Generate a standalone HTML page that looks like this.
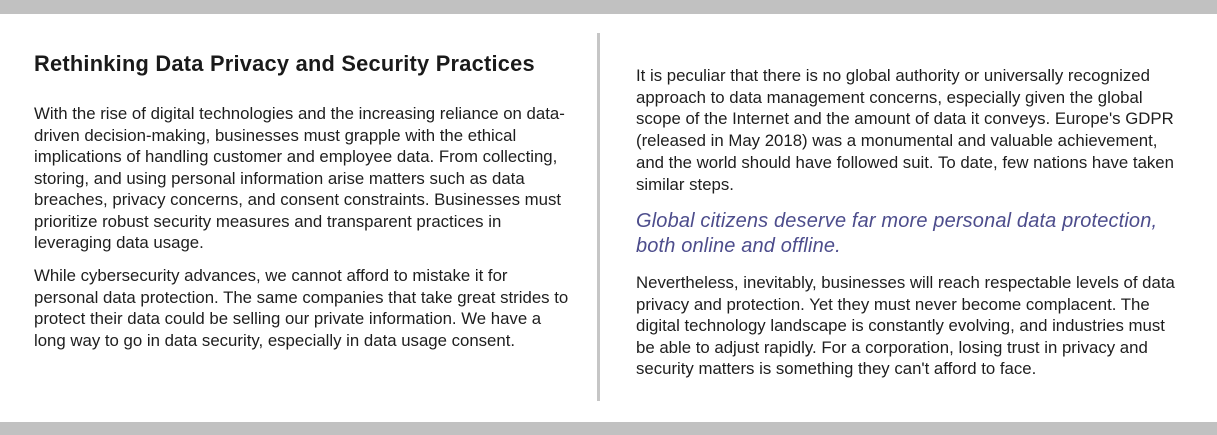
<!DOCTYPE html>
<html><head><style>
html,body{margin:0;padding:0;width:1217px;height:435px;background:#fff;overflow:hidden;position:relative;font-family:"Liberation Sans",sans-serif;}
.bar{position:absolute;left:0;width:1217px;background:#c1c1c1;}
.l{position:absolute;white-space:nowrap;font-size:16.8px;color:#1e1e1e;line-height:20px;letter-spacing:0px;}
.q{position:absolute;white-space:nowrap;font-size:20px;color:#4d4d8c;font-style:italic;line-height:24px;letter-spacing:0.15px;}
h1{position:absolute;left:34px;top:51px;margin:0;font-size:21.8px;font-weight:bold;color:#1a1a1a;line-height:26px;letter-spacing:0.25px;white-space:nowrap;}
</style></head><body>
<div class="bar" style="top:0;height:14px"></div>
<div class="bar" style="top:422px;height:13px"></div>
<div style="position:absolute;left:597px;top:33px;width:3px;height:368px;background:#c6c6c6"></div>
<h1>Rethinking Data Privacy and Security Practices</h1>
<div class="l" style="left:34px;top:104px">With the rise of digital technologies and the increasing reliance on data-</div>
<div class="l" style="left:34px;top:126px">driven decision-making, businesses must grapple with the ethical</div>
<div class="l" style="left:34px;top:147px">implications of handling customer and employee data. From collecting,</div>
<div class="l" style="left:34px;top:169px">storing, and using personal information arise matters such as data</div>
<div class="l" style="left:34px;top:190px">breaches, privacy concerns, and consent constraints. Businesses must</div>
<div class="l" style="left:34px;top:212px">prioritize robust security measures and transparent practices in</div>
<div class="l" style="left:34px;top:233px">leveraging data usage.</div>
<div class="l" style="left:34px;top:266px">While cybersecurity advances, we cannot afford to mistake it for</div>
<div class="l" style="left:34px;top:288px">personal data protection. The same companies that take great strides to</div>
<div class="l" style="left:34px;top:309px">protect their data could be selling our private information. We have a</div>
<div class="l" style="left:34px;top:331px">long way to go in data security, especially in data usage consent.</div>

<div class="l" style="left:636px;top:66px">It is peculiar that there is no global authority or universally recognized</div>
<div class="l" style="left:636px;top:88px">approach to data management concerns, especially given the global</div>
<div class="l" style="left:636px;top:109px">scope of the Internet and the amount of data it conveys. Europe's GDPR</div>
<div class="l" style="left:636px;top:131px">(released in May 2018) was a monumental and valuable achievement,</div>
<div class="l" style="left:636px;top:153px">and the world should have followed suit. To date, few nations have taken</div>
<div class="l" style="left:636px;top:175px">similar steps.</div>
<div class="q" style="left:636px;top:209px">Global citizens deserve far more personal data protection,</div>
<div class="q" style="left:636px;top:234px">both online and offline.</div>
<div class="l" style="left:636px;top:273px">Nevertheless, inevitably, businesses will reach respectable levels of data</div>
<div class="l" style="left:636px;top:295px">privacy and protection. Yet they must never become complacent. The</div>
<div class="l" style="left:636px;top:316px">digital technology landscape is constantly evolving, and industries must</div>
<div class="l" style="left:636px;top:338px">be able to adjust rapidly. For a corporation, losing trust in privacy and</div>
<div class="l" style="left:636px;top:359px">security matters is something they can't afford to face.</div>
</body></html>
